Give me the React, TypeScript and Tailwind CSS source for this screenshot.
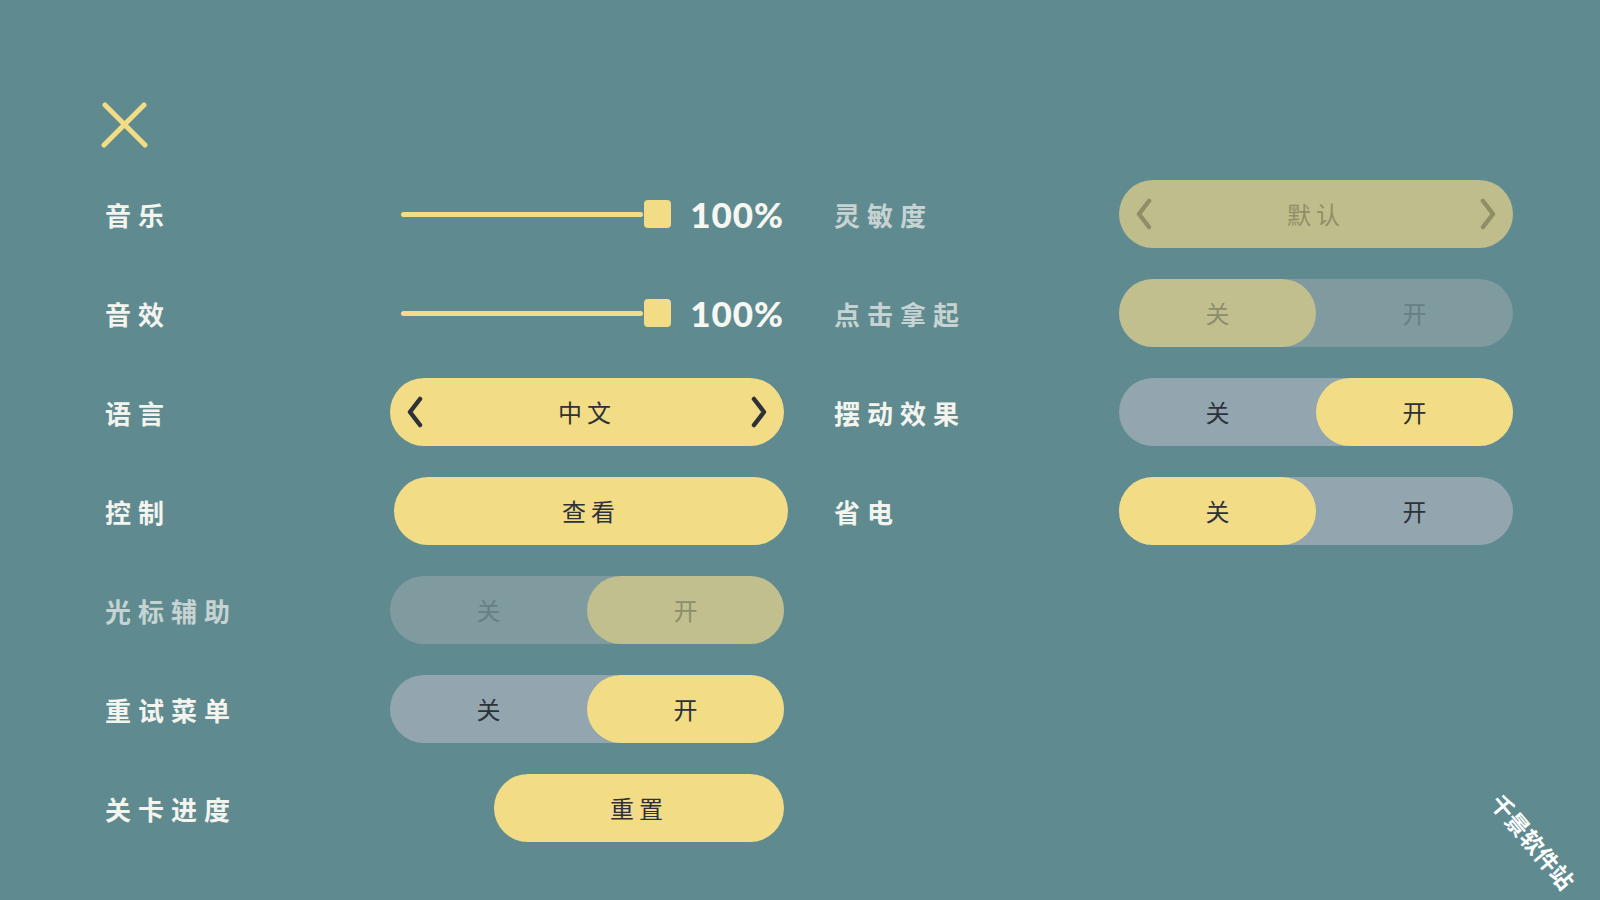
import React from "react";

const CJK = "font-['Noto_Sans_CJK_SC','Noto_Sans',sans-serif]";

interface LabelProps {
  text: string;
  dim?: boolean;
}

const Label = ({ text, dim }: LabelProps) => (
  <div
    className={`w-[285px] shrink-0 text-[26px] font-bold tracking-[7px] ${
      dim ? "text-[#c6d3d2]" : "text-[#f4f4ee]"
    }`}
  >
    {text}
  </div>
);

const Chevron = ({ dir, color }: { dir: "left" | "right"; color: string }) => (
  <svg width="18" height="32" viewBox="0 0 18 32" fill="none">
    <path
      d={dir === "left" ? "M14 3 L4 16 L14 29" : "M4 3 L14 16 L4 29"}
      stroke={color}
      strokeWidth="4.5"
      strokeLinecap="round"
      strokeLinejoin="round"
    />
  </svg>
);

const Slider = () => (
  <div className="w-[394px] h-[68px] flex items-center pl-[11px]">
    <div className="w-[246px] h-[5px] rounded-full bg-[#f2dc86]" />
    <div className="w-[28px] h-[28px] rounded-[4px] bg-[#f2dc86] ml-[1px]" />
    <div className="ml-[19px] font-['Lato',sans-serif] font-black text-[35px] tracking-[1px] text-[#f7f7f2] leading-none">
      100%
    </div>
  </div>
);

const Selector = ({ value, disabled }: { value: string; disabled?: boolean }) => (
  <div
    className={`w-[394px] h-[68px] rounded-full flex items-center justify-between px-4 ${
      disabled ? "bg-[#c0bd8c]" : "bg-[#f2dc86]"
    }`}
  >
    <Chevron dir="left" color={disabled ? "#8f8f67" : "#2d3238"} />
    <span
      className={`text-[24px] tracking-[5px] ${
        disabled ? "text-[#8f8f67]" : "text-[#2d3238]"
      }`}
    >
      {value}
    </span>
    <Chevron dir="right" color={disabled ? "#8f8f67" : "#2d3238"} />
  </div>
);

const Button = ({ text, wide = true }: { text: string; wide?: boolean }) => (
  <div
    className={`${
      wide ? "w-[394px] translate-x-[4px]" : "w-[290px] ml-[104px]"
    } h-[68px] rounded-full bg-[#f2dc86] flex items-center justify-center text-[24px] tracking-[5px] text-[#2d3238]`}
  >
    {text}
  </div>
);

const Toggle = ({ on, disabled }: { on: boolean; disabled?: boolean }) => {
  const track = disabled ? "bg-[#7f9ba0]" : "bg-[#93a6b0]";
  const knob = disabled ? "bg-[#c2bf8f]" : "bg-[#f2dc86]";
  const onText = disabled ? "text-[#8c8e6e]" : "text-[#2d3238]";
  const offText = disabled ? "text-[#677f84]" : "text-[#2d3238]";
  return (
    <div className={`w-[394px] h-[68px] rounded-full flex ${track}`}>
      <div
        className={`w-1/2 h-full rounded-full flex items-center justify-center text-[24px] ${
          !on ? `${knob} ${onText}` : offText
        }`}
      >
        关
      </div>
      <div
        className={`w-1/2 h-full rounded-full flex items-center justify-center text-[24px] ${
          on ? `${knob} ${onText}` : offText
        }`}
      >
        开
      </div>
    </div>
  );
};

const Row = ({ children }: { children: React.ReactNode }) => (
  <div className="h-[68px] flex items-center">{children}</div>
);

export default function App() {
  return (
    <div
      className={`relative w-full h-[900px] overflow-hidden bg-[#5f8b90] pl-[105px] pt-[102px] ${CJK}`}
    >
      <div className="w-[48px] h-[46px] -ml-[4px]">
        <svg width="48" height="46" viewBox="0 0 48 46" fill="none">
          <path
            d="M4 3 L44 43 M43 3 L3 43"
            stroke="#f2dc86"
            strokeWidth="5"
            strokeLinecap="round"
          />
        </svg>
      </div>

      <div className="mt-[32px] flex">
        <div className="flex flex-col gap-[31px]">
          <Row>
            <Label text="音乐" />
            <Slider />
          </Row>
          <Row>
            <Label text="音效" />
            <Slider />
          </Row>
          <Row>
            <Label text="语言" />
            <Selector value="中文" />
          </Row>
          <Row>
            <Label text="控制" />
            <Button text="查看" />
          </Row>
          <Row>
            <Label text="光标辅助" dim />
            <Toggle on disabled />
          </Row>
          <Row>
            <Label text="重试菜单" />
            <Toggle on />
          </Row>
          <Row>
            <Label text="关卡进度" />
            <Button text="重置" wide={false} />
          </Row>
        </div>

        <div className="ml-[50px] flex flex-col gap-[31px]">
          <Row>
            <Label text="灵敏度" dim />
            <Selector value="默认" disabled />
          </Row>
          <Row>
            <Label text="点击拿起" dim />
            <Toggle on={false} disabled />
          </Row>
          <Row>
            <Label text="摆动效果" />
            <Toggle on />
          </Row>
          <Row>
            <Label text="省电" />
            <Toggle on={false} />
          </Row>
        </div>
      </div>

      <div className="absolute left-[1496px] top-[786px] rotate-[50deg] origin-left text-white text-[23px] font-bold whitespace-nowrap leading-none">
        千景软件站
      </div>
    </div>
  );
}
